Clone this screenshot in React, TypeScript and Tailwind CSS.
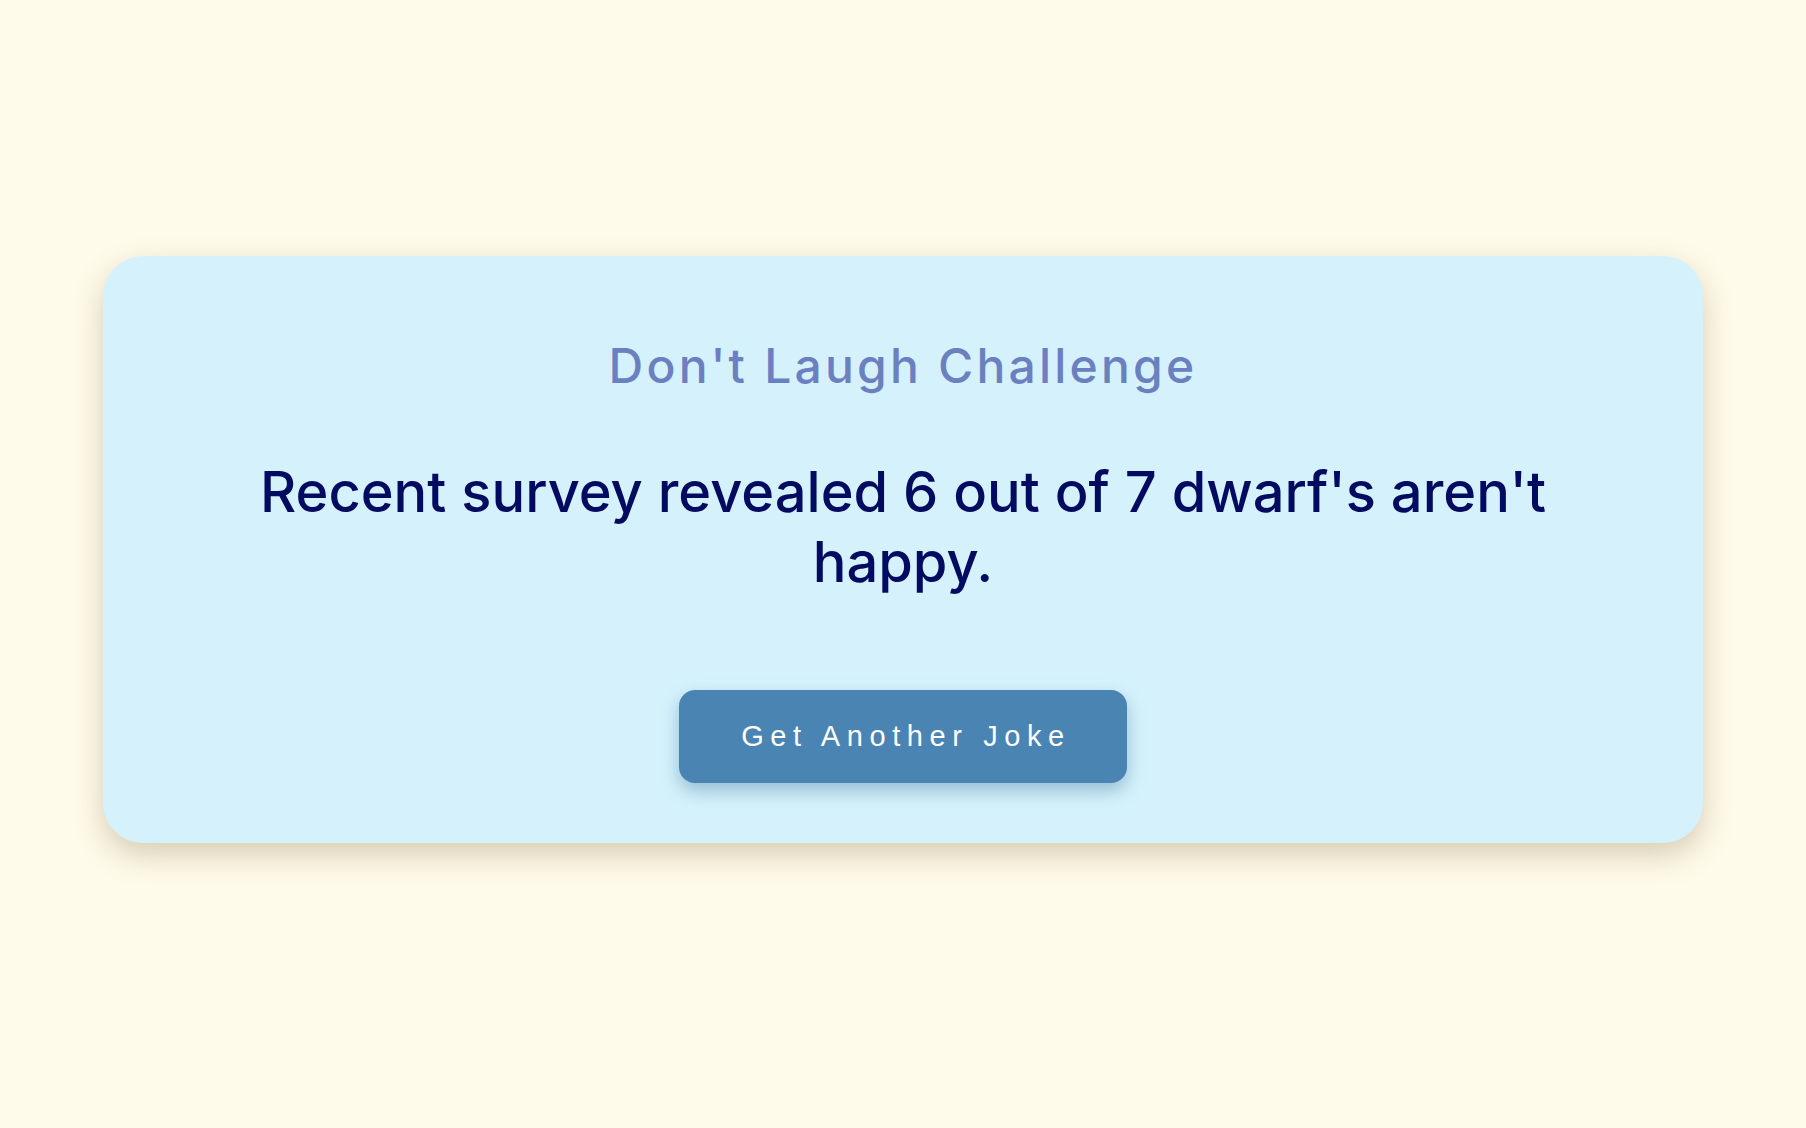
export default function App() {
  return (
    <div className="min-h-screen w-full bg-[#fffbea] flex justify-center pt-[256px]">
      <div className="w-[1600px] h-[587px] bg-[#d5f2fc] rounded-[40px] shadow-[0_12px_30px_rgba(120,100,60,0.3)] flex flex-col items-center">
        <h1 className="mt-[80px] text-[48px] leading-[60px] tracking-[3.2px] text-[#6b80c0] font-['Inter',sans-serif] font-medium">
          Don't Laugh Challenge
        </h1>
        <p className="mt-[61px] w-[1320px] text-center text-[56px] leading-[70px] text-[#020b60] font-['Inter',sans-serif] font-medium">
          Recent survey revealed 6 out of 7 dwarf's aren't happy.
        </p>
        <button className="mt-[93px] w-[448px] h-[93px] pl-[6px] rounded-[16px] bg-[#4a84b2] text-white text-[29px] tracking-[6.6px] font-['Liberation_Sans',Arial,sans-serif] shadow-[0_8px_18px_rgba(60,110,150,0.4)]">
          Get Another Joke
        </button>
      </div>
    </div>
  );
}
